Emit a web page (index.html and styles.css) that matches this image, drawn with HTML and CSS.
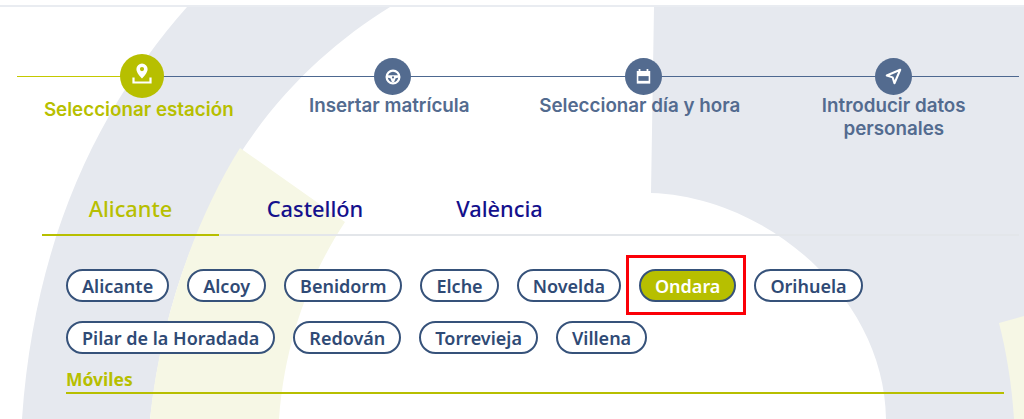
FILE: index.html
```html
<!DOCTYPE html>
<html lang="es">
<head>
<meta charset="utf-8">
<title>Cita previa</title>
<link rel="stylesheet" href="styles.css">
</head>
<body>
<div class="page">
  <svg class="backdrop" viewBox="0 0 1024 419" aria-hidden="true">
    <path class="gray" d="M187 7H390C280 75 175 200 150 419H22C35 230 105 100 187 7Z"/>
    <path class="cream" d="M240 148L345 222C310 275 285 340 279 419H150C160 320 195 220 240 148Z"/>
    <path class="gray" d="M654 7H1024V419H886C885 300 770 197 651 193Z"/>
    <path class="cream" d="M999 323L1024 316V419H1014C1012 385 1006 350 999 323Z"/>
  </svg>
  <div class="topline"></div>

  <ol class="stepper">
    <li class="step step-active">
      <span class="dot">
        <svg viewBox="0 0 24 24" class="icon-lg"><path d="M12-.5a5.600 5.600 0 0 0-5.600 5.600c0 3.800 3.900 7.700 5.600 9.400 1.700-1.700 5.600-5.600 5.600-9.400A5.600 5.600 0 0 0 12-.5Zm0 3.500a2.100 2.100 0 1 1 0 4.200 2.100 2.100 0 0 1 0-4.200Z" fill="#fff" fill-rule="evenodd"/><path d="M3.500 13.500v5h17v-5" fill="none" stroke="#fff" stroke-width="2.200"/></svg>
      </span>
      <span class="label label-left">Seleccionar estación</span>
    </li>
    <li class="step">
      <span class="dot">
        <svg viewBox="0 0 24 24" class="icon"><circle cx="12" cy="12" r="8.500" fill="none" stroke="#fff" stroke-width="3"/><path d="M4 9.500h16v3l-4.500 1.200-2 4.800h-3l-2-4.800L4 12.500Z" fill="#fff"/><circle cx="12" cy="12.500" r="1.400" fill="#536b8f"/></svg>
      </span>
      <span class="label label-left">Insertar matrícula</span>
    </li>
    <li class="step">
      <span class="dot">
        <svg viewBox="0 0 24 24" class="icon-md"><path d="M3.500 5h17v16h-17Z" fill="#fff"/><path d="M7 2.500v4M17 2.500v4" stroke="#fff" stroke-width="2.200"/><path d="M5.500 11.500h13v6h-13Z" fill="#536b8f"/></svg>
      </span>
      <span class="label label-left">Seleccionar día y hora</span>
    </li>
    <li class="step">
      <span class="dot">
        <svg viewBox="0 0 24 24" class="icon-md"><path d="M20.500 3.500 3.500 10.800l7.400 2.300 2.300 7.400Z" fill="none" stroke="#fff" stroke-width="2.600" stroke-linejoin="round"/></svg>
      </span>
      <span class="label">Introducir datos personales</span>
    </li>
  </ol>

  <div class="tabs">
    <a class="tab tab-active">Alicante</a>
    <a class="tab">Castellón</a>
    <a class="tab">València</a>
  </div>

  <div class="pills">
    <span class="pill">Alicante</span>
    <span class="pill">Alcoy</span>
    <span class="pill">Benidorm</span>
    <span class="pill">Elche</span>
    <span class="pill">Novelda</span>
    <span class="pill pill-active">Ondara<i class="highlight"></i></span>
    <span class="pill">Orihuela</span>
    <span class="pill">Pilar de la Horadada</span>
    <span class="pill">Redován</span>
    <span class="pill">Torrevieja</span>
    <span class="pill">Villena</span>
  </div>

  <h3 class="section">Móviles</h3>
</div>
</body>
</html>
```
FILE: styles.css
```css
* { box-sizing: border-box; }
html, body { margin: 0; padding: 0; background: #fff; }
.page {
  position: relative;
  width: 1024px;
  height: 419px;
  overflow: hidden;
  padding-top: 54px;
}
.backdrop { position: absolute; inset: 0; width: 1024px; height: 419px; }
.gray { fill: #e6e9ef; }
.cream { fill: #f6f7e5; }
.topline { position: absolute; left: 0; right: 0; top: 5px; height: 2px; background: #e9ecf1; }

.stepper {
  position: relative;
  display: grid;
  grid-template-columns: repeat(4, 250.5px);
  width: 1002px;
  height: 106px;
  margin: 0 0 0 17px;
  padding: 0;
  list-style: none;
  font-family: Inter, "Liberation Sans", sans-serif;
  font-weight: 600;
  font-size: 18.800px;
  line-height: 23px;
  color: #536b8f;
}
.stepper::before {
  content: "";
  position: absolute;
  left: 0;
  right: 0;
  top: 21.500px;
  height: 1px;
  background: #4d6890;
}
.stepper::after {
  content: "";
  position: absolute;
  left: 0;
  width: 110px;
  top: 21.500px;
  height: 1px;
  background: #c4c900;
}
.step {
  position: relative;
  z-index: 1;
  display: flex;
  flex-direction: column;
  align-items: center;
  text-align: center;
  padding-top: 4px;
}
.dot {
  display: flex;
  align-items: center;
  justify-content: center;
  width: 37px;
  height: 37px;
  border-radius: 50%;
  background: #536b8f;
}
.icon { width: 18px; height: 18px; }
.icon-md { width: 19px; height: 19px; }
.icon-lg { width: 24px; height: 24px; overflow: visible; }
.label { display: block; max-width: 210px; margin-top: -1px; }
.label-left { margin-right: 7px; }
.step-active { padding-top: 0; color: #b7bf00; }
.step-active .dot { width: 44px; height: 44px; background: #b7bf00; }
.step-active .label { margin-top: 0; }

.tabs {
  position: relative;
  display: flex;
  gap: 7.500px;
  width: 977px;
  height: 76px;
  margin: 0 0 0 42px;
  padding-top: 34px;
  border-bottom: 2px solid #e3e6ea;
  font-family: "Noto Sans", sans-serif;
  font-weight: 500;
  font-size: 21.800px;
  line-height: 30px;
}
.tab {
  width: 177px;
  height: 42px;
  text-align: center;
  color: #14108c;
}
.tab-active {
  color: #b7bf00;
  border-bottom: 2px solid #b7bf00;
}

.pills {
  position: relative;
  display: flex;
  flex-wrap: wrap;
  gap: 19px 18px;
  margin: 33px 0 0 66px;
  width: 860px;
  font-family: "Noto Sans", sans-serif;
  font-weight: 600;
  font-size: 18px;
}
.pill {
  position: relative;
  height: 33px;
  line-height: 31px;
  padding: 0 14px;
  border: 2px solid #36527a;
  border-radius: 16.500px;
  background: #fff;
  color: #2f4a75;
  white-space: nowrap;
}
.pill-active { background: #b7bf00; color: #fff; }
.highlight {
  position: absolute;
  left: -15px;
  top: -16px;
  width: 120px;
  height: 60px;
  border: 3px solid #fb0007;
}

.section {
  position: relative;
  width: 938px;
  height: 26px;
  margin: 14px 0 0 66px;
  border-bottom: 2px solid #b7bf00;
  font-family: "Noto Sans", sans-serif;
  font-weight: 700;
  font-size: 17.500px;
  line-height: 22px;
  color: #b7bf00;
}
```
